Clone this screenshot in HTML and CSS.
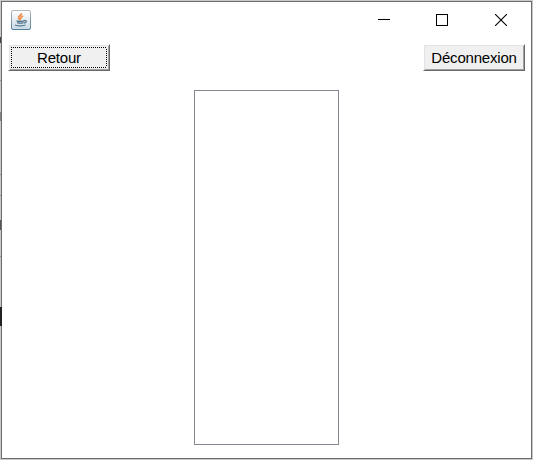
FILE: index.html
```
<!DOCTYPE html>
<html lang="fr">
<head>
<meta charset="utf-8">
<title>Application</title>
<link rel="stylesheet" href="styles.css">
</head>
<body>
<div class="window">
  <header class="titlebar">
    <svg class="app-icon" width="20" height="20" viewBox="0 0 20 20">
      <defs>
        <linearGradient id="tile" x1="0" y1="0" x2="0" y2="1"><stop offset="0" stop-color="#ffffff"/><stop offset="1" stop-color="#c9d9e3"/></linearGradient>
        <linearGradient id="edge" x1="0" y1="0" x2="0" y2="1"><stop offset="0" stop-color="#b4b8bb"/><stop offset="1" stop-color="#54809c"/></linearGradient>
      </defs>
      <rect x=".5" y=".5" width="19" height="19" rx="1.5" fill="url(#tile)" stroke="url(#edge)"/>
      <path d="M10.300 3.200C11 5.200 7.400 5.700 7.600 7.700C7.700 8.900 9 9.300 9.200 10.300M12.200 6C9.500 7 9.300 7.900 10.300 9" fill="none" stroke="#ee8c48" stroke-width="1.700"/>
      <path d="M5.500 10.900Q9 12 13 10.800M6.200 12.700Q9.500 13.700 12.500 12.600M4 15Q9 16.900 14.500 15M13 10.600Q16.200 10.200 15 12Q14.400 12.900 12.900 13.200" fill="none" stroke="#50778f" stroke-width="1.300"/>
    </svg>
    <div class="controls">
      <svg width="12" height="12" viewBox="0 0 12 12" shape-rendering="crispEdges"><path d="M0 5.500H12" stroke="#000"/></svg>
      <svg width="12" height="12" viewBox="0 0 12 12" shape-rendering="crispEdges"><path d="M.5.500H11.500V11.500H.5Z" fill="none" stroke="#000"/></svg>
      <svg class="close" width="12" height="12" viewBox="0 0 12 12"><path d="M0 0L12 12M12 0L0 12" stroke="#000" stroke-width="1.100"/></svg>
    </div>
  </header>
  <nav class="toolbar">
    <button class="button focused">Retour</button>
    <button class="button">Déconnexion</button>
  </nav>
  <main class="content"><div class="list"></div></main>
  <div class="backdrop">
    <i class="mark m1"></i><i class="mark m2"></i><i class="mark m3"></i><i class="mark m4"></i>
    <i class="line l1"></i><i class="line l2"></i><i class="line l3"></i><i class="line l4"></i>
  </div>
</div>
</body>
</html>
```
FILE: styles.css
```
* { box-sizing: border-box; }
body {
  margin: 0;
  padding: 1px;
  height: 460px;
  overflow: hidden;
  background: #c9c9c9;
  font: 15px "Liberation Sans", Arial, sans-serif;
}
.window {
  position: relative;
  display: flex;
  flex-direction: column;
  height: 458px;
  border: 1px solid #6c6c6c;
  background: #fff;
}
.titlebar {
  display: flex;
  justify-content: space-between;
  align-items: flex-start;
  height: 42px;
  padding: 8px 24px 0 9px;
}
.app-icon { display: block; }
.controls { display: flex; gap: 46px; padding-top: 4px; }
.controls svg { display: block; }
.controls .close { margin-left: 1px; }
.toolbar {
  display: flex;
  justify-content: space-between;
  padding: 0 6px;
}
.button {
  position: relative;
  width: 102px;
  height: 27px;
  padding: 0;
  border: 1px solid;
  border-color: #fff #696969 #696969 #fff;
  box-shadow: inset 1px 1px #e3e3e3, inset -1px -1px #a0a0a0;
  background: #f0f0f0;
  color: #000;
  font: inherit;
  line-height: 25px;
  letter-spacing: -0.2px;
}
.focused::after {
  content: "";
  position: absolute;
  inset: 2px;
  --h: repeating-linear-gradient(90deg, #000 0 1px, #f0f0f0 1px 2px);
  --v: repeating-linear-gradient(#000 0 1px, #f0f0f0 1px 2px);
  background:
    var(--h) top / 100% 1px no-repeat,
    var(--h) bottom / 100% 1px no-repeat,
    var(--v) left / 1px 100% no-repeat,
    var(--v) right / 1px 100% no-repeat;
}
.content {
  flex: 1;
  display: flex;
  justify-content: center;
  padding: 19px 0 13px;
}
.list {
  width: 145px;
  border: 1px solid #828790;
}
.backdrop {
  position: absolute;
  left: -2px;
  top: -2px;
  width: 1px;
  height: 460px;
}
.mark, .line { position: absolute; left: 0; width: 1px; height: 1px; background: #999; }
.m1 { top: 37px; height: 6px; background: #444; }
.m2 { top: 112px; height: 9px; background: #858585; }
.m3 { top: 220px; height: 10px; background: #555; }
.m4 { top: 307px; width: 2px; height: 19px; background: #222; }
.l1 { top: 80px; }
.l2 { top: 174px; }
.l3 { top: 195px; }
.l4 { top: 256px; }
```
